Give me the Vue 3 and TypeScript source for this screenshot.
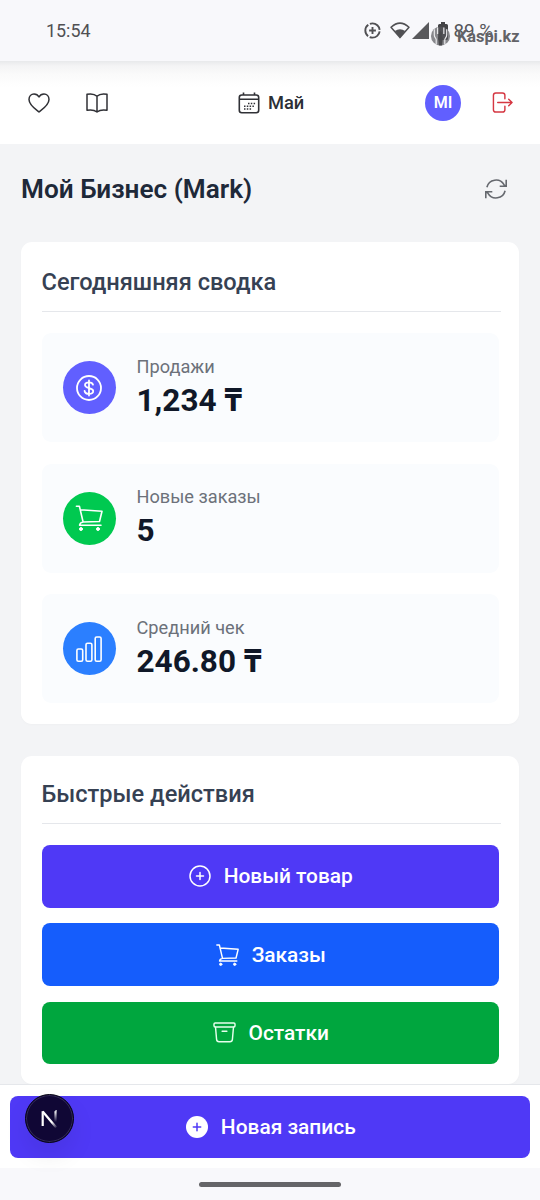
<script setup lang="ts">
interface Stat {
  label: string
  value: string
  tone: string
  icon: 'dollar' | 'cart' | 'bars'
}

interface Action {
  label: string
  tone: string
  icon: 'plus' | 'cart' | 'archive'
}

const stats: Stat[] = [
  { label: 'Продажи', value: '1,234 ₸', tone: 'violet', icon: 'dollar' },
  { label: 'Новые заказы', value: '5', tone: 'lime', icon: 'cart' },
  { label: 'Средний чек', value: '246.80 ₸', tone: 'sky', icon: 'bars' },
]

const actions: Action[] = [
  { label: 'Новый товар', tone: 'indigo', icon: 'plus' },
  { label: 'Заказы', tone: 'blue', icon: 'cart' },
  { label: 'Остатки', tone: 'green', icon: 'archive' },
]
</script>

<template>
  <div class="screen">
    <div class="status">
      <span class="clock">15:54</span>
      <div class="system">
        <svg class="saver" viewBox="0 0 18 18" fill="none" stroke="#505053">
          <circle cx="9" cy="9" r="7.600" stroke-width="2" stroke-dasharray="13.900 2" stroke-dashoffset="-1" />
          <path d="M9 5.4v7.2M5.4 9h7.200" stroke-width="2" />
        </svg>
        <svg class="wifi" viewBox="0 0 20 17">
          <path d="M1 5.2Q10-3 19 5.2L10 15.6Z" fill="none" stroke="#505053" stroke-width="1.5" stroke-linejoin="round" />
          <path d="M4.8 9q5.2-3.4 10.4 0L10 15.6Z" fill="#505053" />
        </svg>
        <svg class="signal" viewBox="0 0 17 17"><path d="M17 0v17H0z" fill="#59595c" /></svg>
        <svg class="battery" viewBox="0 0 10 18"><path d="M3 0h4v2h1.5Q10 2 10 3.500v13Q10 18 8.500 18h-7Q0 18 0 16.500v-13Q0 2 1.500 2H3z" fill="#444447" /></svg>
        <span class="percent">89 %</span>
      </div>
      <div class="watermark">
        <svg viewBox="0 0 22 22">
          <circle cx="11" cy="11" r="10" fill="#59595c" fill-opacity=".7" />
          <path d="M4.500 4v6c0 3 2 3 2 5v5M8 2v7M14.500 2v7M17.500 4v6c0 3-2 3-2 5v5" fill="none" stroke="#eeeef0" stroke-width="1.200" />
          <path d="M11 5.500l1.700 2.500-.6 3.200 1.400 2-.8 7.800h-3.400l-.8-7.800 1.400-2L9.300 8z" fill="#49494c" />
        </svg>
        <span>Kaspi.kz</span>
      </div>
    </div>

    <header class="topbar">
      <svg class="heart" viewBox="0 0 22 20" fill="none" stroke="#303136" stroke-width="1.500" stroke-linejoin="round">
        <path d="M11 19C7.500 16.300 1 12 1 6.500 1 3.100 3.300 1 6 1c2.200 0 4 1.200 5 3 1-1.800 2.800-3 5-3 2.700 0 5 2.100 5 5.500C21 12 14.500 16.300 11 19z" />
      </svg>
      <svg class="book" viewBox="0 0 22 20" fill="none" stroke="#303136" stroke-width="1.500" stroke-linejoin="round">
        <path d="M11 3.300C8.600.9 4.300.7 1 1.300v15.900c3.500-.6 7.400-.4 10 1.800 2.600-2.200 6.500-2.400 10-1.800V1.300C17.700.7 13.400.9 11 3.300zM11 3.300V19" />
      </svg>
      <div class="month">
        <svg viewBox="0 0 22 22" fill="none" stroke="#303136">
          <rect x="1.300" y="3" width="19.400" height="17.800" rx="2.500" stroke-width="1.600" />
          <path d="M1.300 7.300h19.400M5.500 .5v2.500M16.500 .5v2.500" stroke-width="1.600" />
          <path d="M10 11.500h7.500M6 14.200h11M6 17h8" stroke-width="1.500" stroke-dasharray="1.500 1.300" />
        </svg>
        <span>Май</span>
      </div>
      <span class="avatar">MI</span>
      <svg class="exit" viewBox="0 0 22 22" fill="none" stroke="#d53742" stroke-width="1.500" stroke-linecap="round" stroke-linejoin="round">
        <path d="M13.500 7V3.500Q13.500 1 11 1H4Q1.500 1 1.500 3.500v15Q1.500 21 4 21h7q2.500 0 2.500-2.500V15M6 11h15M17.500 7.500 21 11l-3.500 3.500" />
      </svg>
    </header>

    <main class="content">
      <div class="heading">
        <h1>Мой Бизнес (Mark)</h1>
        <svg viewBox="0 0 22 22" fill="none" stroke="#66696f" stroke-width="1.600">
          <path d="M1.900 9.300A9.300 9.300 0 0 1 19 6.700l1.700 1.700M21.200 1.800v6.500h-6.500M20.100 12.700A9.300 9.300 0 0 1 3 15.300l-1.700-1.700M.8 20.200v-6.500h6.500" />
        </svg>
      </div>

      <section class="card summary">
        <h2>Сегодняшняя сводка</h2>
        <div class="tiles">
          <div v-for="s in stats" :key="s.label" class="tile">
            <span class="disc" :class="s.tone">
              <svg v-if="s.icon === 'dollar'" viewBox="0 0 26 26" fill="none" stroke="#fff" stroke-width="1.800" stroke-linecap="round">
                <circle cx="13" cy="13" r="12" />
                <path d="M13 5.500v15M17 9.700c-.4-1.600-2-2.400-4-2.400-2.300 0-4 1-4 2.800 0 4 8.200 1.800 8.200 5.900 0 1.800-1.800 2.900-4.200 2.900-2.500 0-4.100-1.100-4.400-2.900" />
              </svg>
              <svg v-else-if="s.icon === 'cart'" viewBox="0 0 26 26" fill="none" stroke="#fff" stroke-width="1.600" stroke-linecap="round" stroke-linejoin="round">
                <path d="M0.400 1.200H3.400L7.100 17M4.400 4.700 26 6.300 23.500 16.500L7.100 17Q4 17.500 3.600 20.200H25" />
                <circle cx="5" cy="24" r="1.500" fill="#fff" stroke-width="1" />
                <circle cx="22" cy="24" r="1.500" fill="#fff" stroke-width="1" />
              </svg>
              <svg v-else viewBox="0 0 26 26" fill="none" stroke="#fff" stroke-width="1.600">
                <rect x=".9" y="13" width="5.800" height="12.200" rx="1.500" />
                <rect x="10" y="7.300" width="5.900" height="17.900" rx="1.500" />
                <rect x="19.200" y="1" width="5.900" height="24.200" rx="1.500" />
              </svg>
            </span>
            <div class="figures">
              <span class="label">{{ s.label }}</span>
              <strong class="value">{{ s.value }}</strong>
            </div>
          </div>
        </div>
      </section>

      <section class="card quick">
        <h2>Быстрые действия</h2>
        <div class="buttons">
          <button v-for="a in actions" :key="a.label" type="button" class="btn" :class="a.tone">
            <svg v-if="a.icon === 'plus'" class="i-plus" viewBox="0 0 22 22" fill="none" stroke="#fff" stroke-width="1.500" stroke-linecap="round">
              <circle cx="11" cy="11" r="10" /><path d="M11 7.500v7M7.500 11h7" />
            </svg>
            <svg v-else-if="a.icon === 'cart'" class="i-cart" viewBox="0 0 26 26" fill="none" stroke="#fff" stroke-width="1.700" stroke-linecap="round" stroke-linejoin="round">
              <path d="M0.400 1.200H3.400L7.100 17M4.400 4.700 25.600 6.300 23.100 16.500L7.100 17Q4 17.500 3.600 20.200H24" />
              <circle cx="5" cy="24" r="1.400" fill="#fff" stroke-width="1" />
              <circle cx="21.500" cy="24" r="1.400" fill="#fff" stroke-width="1" />
            </svg>
            <svg v-else class="i-box" viewBox="0 0 24 22" fill="none" stroke="#e6ffed" stroke-width="1.500" stroke-linecap="round" stroke-linejoin="round">
              <rect x="1" y="1" width="22" height="4.200" rx="1.200" />
              <path d="M2.600 5.500 3.700 18.200Q3.900 20.700 6.300 20.700H17.700Q20.100 20.700 20.300 18.200L21.400 5.500M9.500 9.700h5" />
            </svg>
            <span>{{ a.label }}</span>
          </button>
        </div>
      </section>
    </main>

    <footer class="dock">
      <button type="button" class="btn indigo record">
        <svg class="i-plus" viewBox="0 0 22 22">
          <circle cx="11" cy="11" r="11" fill="#fff" />
          <path d="M11 7.300v7.400M7.300 11h7.400" stroke="#4f39f6" stroke-width="1.500" stroke-linecap="round" />
        </svg>
        <span>Новая запись</span>
      </button>
      <span class="devtool">
        <svg viewBox="0 0 18 18" fill="none">
          <defs>
            <linearGradient id="fadeDiagonal" x1="8" y1="8" x2="16" y2="18" gradientUnits="userSpaceOnUse">
              <stop offset=".4" stop-color="#fff" /><stop offset="1" stop-color="#fff" stop-opacity="0" />
            </linearGradient>
            <linearGradient id="fadeStem" x1="0" y1="1" x2="0" y2="12" gradientUnits="userSpaceOnUse">
              <stop offset="0" stop-color="#fff" /><stop offset="1" stop-color="#fff" stop-opacity="0" />
            </linearGradient>
          </defs>
          <path d="M1.700 1.500 15.200 17.500" stroke="url(#fadeDiagonal)" stroke-width="2.200" />
          <path d="M1.700 16V1.200" stroke="#fff" stroke-width="2.200" />
          <path d="M14.500 1.200h.01v11.800" stroke="url(#fadeStem)" stroke-width="2.200" />
        </svg>
      </span>
    </footer>
    <div class="gesture"><span></span></div>
  </div>
</template>

<style>
body {
  margin: 0;
}
</style>

<style scoped>
.screen {
  position: relative;
  display: flex;
  flex-direction: column;
  width: 540px;
  height: 1200px;
  overflow: hidden;
  background: #f3f4f6;
  font-family: Roboto, "Noto Sans", sans-serif;
}
svg {
  display: block;
  flex: none;
  overflow: visible;
}
.status {
  position: relative;
  display: flex;
  flex: none;
  justify-content: space-between;
  align-items: center;
  box-sizing: border-box;
  height: 61px;
  padding: 0 47px 0 46px;
  background: #f8f8fb;
}
.clock {
  color: #505053;
  font-size: 17.900px;
}
.system {
  display: flex;
  align-items: center;
  color: #55565a;
  font-size: 18.800px;
}
.saver {
  width: 17px;
  height: 17px;
  margin-right: 9px;
}
.wifi {
  width: 20px;
  height: 17px;
  margin-right: 2px;
}
.signal {
  width: 17px;
  height: 17px;
  margin-right: 9px;
}
.battery {
  width: 10px;
  height: 18px;
  margin-right: 5px;
}
.watermark {
  position: absolute;
  top: 25px;
  left: 430px;
  display: flex;
  align-items: center;
  gap: 6px;
  color: #636367;
  font-size: 16.300px;
  font-weight: 700;
}
.watermark svg {
  width: 21px;
  height: 22px;
}
.topbar {
  display: flex;
  flex: none;
  align-items: center;
  box-sizing: border-box;
  height: 83px;
  padding: 0 27px 0 28px;
  background: linear-gradient(#e8e9eb 0, #f4f4f5 5px, #fafafa 13px, #fff 26px);
}
.heart {
  width: 22px;
  height: 20px;
  margin-right: 36px;
}
.book {
  width: 22px;
  height: 20px;
}
.month {
  display: flex;
  align-items: center;
  gap: 8px;
  margin-left: 130px;
  color: #2c2f36;
  font-size: 18.300px;
  font-weight: 500;
}
.month svg {
  width: 22px;
  height: 22px;
}
.avatar {
  display: grid;
  place-items: center;
  width: 36px;
  height: 36px;
  margin-left: auto;
  border-radius: 50%;
  background: #615fff;
  color: #fff;
  font-size: 16px;
  font-weight: 600;
}
.exit {
  width: 21px;
  height: 21px;
  margin-left: 31px;
}
.content {
  flex: 1;
  min-height: 0;
  padding: 0 21px;
  overflow: hidden;
}
.heading {
  display: flex;
  align-items: center;
  justify-content: space-between;
  box-sizing: border-box;
  height: 98px;
  padding: 0 12px 9px 0;
}
h1 {
  margin: 0;
  color: #1e2939;
  font-size: 26.200px;
  font-weight: 560;
}
.heading svg {
  width: 22px;
  height: 22px;
}
.card {
  box-sizing: border-box;
  padding: 0 20.500px 21px;
  border-radius: 11px;
  background: #fff;
  box-shadow: 0 1px 3px rgba(0, 0, 0, 0.02);
}
.summary {
  height: 482px;
  margin-bottom: 32px;
}
.quick {
  height: 328px;
}
h2 {
  display: flex;
  align-items: center;
  box-sizing: border-box;
  height: 70px;
  margin: 0 -2px 0 0;
  padding-top: 10px;
  border-bottom: 1px solid #e5e7eb;
  color: #364153;
  font-size: 23.600px;
  font-weight: 550;
}
.quick h2 {
  height: 68px;
  padding-top: 9px;
}
.tiles {
  display: grid;
  gap: 21.500px;
  margin-top: 21px;
}
.tile {
  display: flex;
  align-items: center;
  gap: 21px;
  box-sizing: border-box;
  height: 109px;
  padding-left: 21px;
  border-radius: 9px;
  background: #fafcfe;
}
.disc {
  display: grid;
  place-items: center;
  width: 53px;
  height: 53px;
  border-radius: 50%;
}
.disc svg {
  width: 26px;
  height: 26px;
}
.violet {
  background: #615fff;
}
.lime {
  background: #00c950;
}
.sky {
  background: #2b7fff;
}
.figures {
  display: flex;
  flex-direction: column;
}
.label {
  color: #6c717a;
  font-size: 18.200px;
  line-height: 26px;
}
.value {
  color: #101828;
  font-size: 31.500px;
  font-weight: 700;
  line-height: 42px;
}
.buttons {
  display: grid;
  gap: 15.800px;
  margin-top: 21px;
}
.btn {
  display: flex;
  align-items: center;
  justify-content: center;
  gap: 12.500px;
  width: 100%;
  height: 62.500px;
  padding: 0 0 0 2px;
  border: 0;
  border-radius: 8px;
  color: #fff;
  font-family: inherit;
  font-size: 20.900px;
  font-weight: 500;
}
.i-plus {
  width: 22px;
  height: 22px;
}
.i-cart {
  width: 23px;
  height: 22px;
}
.i-box {
  width: 23px;
  height: 21px;
}
.indigo {
  background: #4f39f6;
}
.blue {
  background: #155dfc;
}
.green {
  background: #00a63e;
}
.dock {
  position: relative;
  flex: none;
  box-sizing: border-box;
  height: 84px;
  padding: 10.500px 10px 0;
  border-top: 1px solid #e5e7eb;
  background: #fff;
}
.devtool {
  position: absolute;
  top: 9px;
  left: 25px;
  display: grid;
  place-items: center;
  box-sizing: border-box;
  width: 49px;
  height: 49px;
  border: 1px solid #050313;
  border-radius: 50%;
  background: #100735;
  box-shadow: inset 0 0 0 1px #342b58, 0 12px 25px rgba(0, 0, 0, 0.08);
}
.devtool svg {
  width: 18px;
  height: 18px;
}
.gesture {
  display: flex;
  flex: none;
  justify-content: center;
  box-sizing: border-box;
  height: 32px;
  padding-top: 14px;
  background: #f8f8fb;
}
.gesture span {
  width: 142px;
  height: 5px;
  border-radius: 3px;
  background: #656568;
}
</style>
